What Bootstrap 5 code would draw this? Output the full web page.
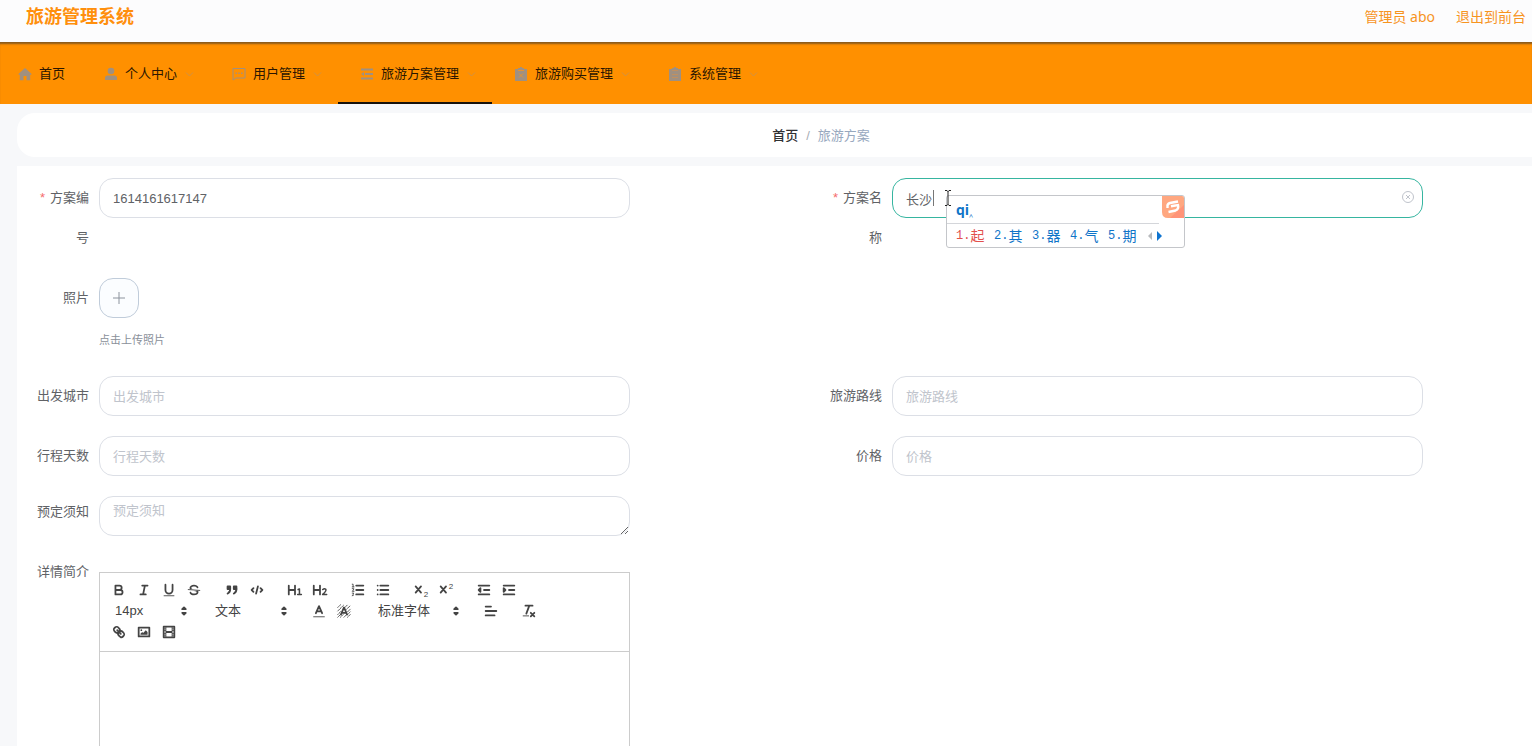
<!DOCTYPE html>
<html lang="zh-CN">
<head>
<meta charset="utf-8">
<meta name="viewport" content="width=device-width, initial-scale=1">
<title>旅游管理系统</title>
<link href="https://cdn.jsdelivr.net/npm/bootstrap@5.3.0/dist/css/bootstrap.min.css" rel="stylesheet">
<style>
  body { font: 13px/1.5 "Liberation Sans", "Noto Sans CJK SC", sans-serif; color: #606266; background: #f7f8fa; }
  a { text-decoration: none; }

  .topbar { height: 42px; padding: 0 6px 9px 26px; background: #fcfcfd; font-family: "Noto Sans", "Noto Sans CJK SC", sans-serif; font-size: 14px; }
  .topbar a { color: #f7941f; }
  .topbar .site-title { color: #ff8f0c; font-size: 18px; font-weight: 700; }
  .topbar .user-links { gap: 21px; }

  .mainmenu { height: 62px; background: #ff9000; box-shadow: inset 0 3px 2px -1px #8a5a1c; }
  .mainmenu .nav-link { height: 100%; padding: 4px 16px 0 22px; color: #2b1600; font-size: 13px; border-radius: 0; border-bottom: 2px solid transparent; display: flex; align-items: center; }
  .mainmenu .nav-link.home { padding: 4px 17px 0 18px; }
  .mainmenu .nav-link.active { border-bottom-color: #17120c; }
  .mainmenu .menu-icon { width: 14px; height: 14px; margin-right: 7px; color: #a09080; }
  .mainmenu .chev { width: 9px; height: 9px; margin-left: 8px; color: #cf9248; }

  .page-main { width: calc(100% + 93px); padding: 9px 0 0 17px; }
  .crumbs { height: 44px; border-radius: 18px; background: #fff; margin-bottom: 9px; padding-top: 2px; }
  .crumbs .breadcrumb { --bs-breadcrumb-item-padding-x: 8px; --bs-breadcrumb-divider-color: #a8adb5; font-size: 13px; }
  .crumbs a { color: #303133; font-weight: 500; }
  .crumbs .active { color: #97a8be; }

  .plan-form { background: #fff; padding: 12px 11px; }
  .field { display: flex; margin-bottom: 20px; }
  .field > label { flex: none; width: 71px; padding-right: 10px; text-align: right; line-height: 40px; font-size: 13px; }
  .field > label.tight { line-height: 32px; }
  .field .req { color: #f56c6c; margin-right: 5px; }
  .field .ctl { width: 67%; flex: none; position: relative; }
  .field .form-control { height: 40px; border: 1px solid #dcdfe6; border-radius: 14px; padding: 0 13px; font-size: 13px; color: #606266; background: #fff; }
  .field textarea.form-control { padding: 4px 13px; min-height: 40px; }
  .field .form-control::placeholder { color: #c0c4cc; }
  .field .form-control.editing { border-color: #36b5a0; }

  .clear-btn { position: absolute; right: 8px; top: 12px; width: 14px; height: 14px; padding: 0; border: 0; background: none; color: #c0c4cc; display: flex; }
  .caret-bar { position: absolute; left: 41px; top: 12px; width: 1px; height: 16px; background: #777; }
  .ibeam { position: absolute; left: 52px; top: 12px; width: 8px; height: 16px; z-index: 3; }

  .upload { width: 40px; height: 40px; border: 1px solid #c0ccda; border-radius: 14px; background: #fbfdff; color: #8c939d; padding: 0; display: flex; align-items: center; justify-content: center; }
  .upload-tip { font-size: 11px; line-height: 18px; padding: 13px 0 7px; color: #8a909a; }

  .ime { position: absolute; left: 54px; top: 17px; width: 239px; height: 53px; background: #fff; border: 1px solid #c4c6ca; border-radius: 3px; z-index: 2; color: #0f74c8; }
  .ime .typed { height: 28px; margin-right: 25px; padding-left: 9px; border-bottom: 1px solid #d4d6da; font: 700 14px/27px "Open Sans", sans-serif; }
  .ime .typed small { font-size: 10px; font-weight: 400; }
  .ime .cands { gap: 10px; height: 23px; padding-left: 9px; font-family: "Noto Sans CJK SC", sans-serif; font-size: 14px; line-height: 23px; }
  .ime .cands span { display: flex; width: 28px; }
  .ime .cands i { font: 12px/24px "Liberation Mono", monospace; }
  .ime .cands .first { color: #e2504c; }
  .ime .brand { position: absolute; right: 0; top: 0; width: 22px; height: 22px; }

  .editor { border: 1px solid #ccc; margin-top: 16px; }
  .editor .tools { padding: 6px 7px 9px 6px; border-bottom: 1px solid #ccc; display: flex; flex-wrap: wrap; }
  .editor .grp { display: flex; margin-right: 13px; height: 21px; }
  .editor .grp button { width: 25px; height: 21px; padding: 0; border: 0; background: none; display: flex; align-items: center; justify-content: center; }
  .editor .tools svg { width: 16px; height: 16px; fill: none; stroke: #444; stroke-width: 2; stroke-linecap: round; stroke-linejoin: round; }
  .editor svg .thin { stroke-width: 1; }
  .editor svg .solid { fill: #444; stroke: none; }
  .editor svg .both { fill: #444; }
  .editor svg text { fill: #444; stroke: none; font-family: "Liberation Sans", sans-serif; }
  .picker { position: relative; width: 87px; }
  .picker.wide { width: 96px; }
  .picker select { appearance: none; border: 0; background: none; width: 100%; height: 21px; padding: 0 9px; font-size: 13px; line-height: 21px; color: #444; }
  .picker svg { position: absolute; right: 1px; top: 3px; pointer-events: none; }
  .editor .writing { min-height: 320px; padding: 12px 15px; outline: 0; }
</style>
</head>
<body>
<div class="vh-100 overflow-hidden">
  <header class="topbar d-flex align-items-center justify-content-between">
    <a href="#" class="site-title">旅游管理系统</a>
    <div class="user-links d-flex">
      <a href="#">管理员 abo</a>
      <a href="#">退出到前台</a>
    </div>
  </header>

  <nav class="mainmenu nav flex-nowrap">
    <a class="nav-link home" href="#"><svg class="menu-icon" viewBox="0 0 14 14" fill="currentColor"><path d="M7 1 0.6 6.8v1h1.2V13.2H5.5V9h3v4.2h3.7V7.8h1.2v-1z"/></svg>首页</a>
    <a class="nav-link" href="#"><svg class="menu-icon" viewBox="0 0 14 14" fill="currentColor"><circle cx="7" cy="4" r="3.3"/><path d="M1 13v-2q0-2.5 2.5-2.5h7q2.500 0 2.500 2.500v2z"/></svg>个人中心<svg class="chev" viewBox="0 0 9 9" fill="none" stroke="currentColor"><path d="m1 2.500 3.500 3.500L8 2.500"/></svg></a>
    <a class="nav-link" href="#"><svg class="menu-icon" viewBox="0 0 14 14" fill="none" stroke="currentColor"><path d="M1 1.500h12v9.500H4L1 13z"/><path d="M3.500 6.200h1.400M6.300 6.200h1.400M9.100 6.200h1.400" stroke-width="1.400"/></svg>用户管理<svg class="chev" viewBox="0 0 9 9" fill="none" stroke="currentColor"><path d="m1 2.500 3.500 3.500L8 2.500"/></svg></a>
    <a class="nav-link active" href="#"><svg class="menu-icon" viewBox="0 0 14 14" fill="none" stroke="currentColor" stroke-width="2"><path d="M1 2.500h12M5 7h8M1 11.500h12"/><path d="M4 5v4L1 7z" fill="currentColor" stroke="none"/></svg>旅游方案管理<svg class="chev" viewBox="0 0 9 9" fill="none" stroke="currentColor"><path d="m1 2.500 3.500 3.500L8 2.500"/></svg></a>
    <a class="nav-link" href="#"><svg class="menu-icon" viewBox="0 0 14 14"><path fill="currentColor" d="M1 2h3V1h2V0h2v1h2v1h3v12H1z"/><path d="M4 3.500h6M5 6.500l4 4M9 6.500l-4 4" stroke="#e09438" fill="none"/></svg>旅游购买管理<svg class="chev" viewBox="0 0 9 9" fill="none" stroke="currentColor"><path d="m1 2.500 3.500 3.500L8 2.500"/></svg></a>
    <a class="nav-link" href="#"><svg class="menu-icon" viewBox="0 0 14 14"><path fill="currentColor" d="M1 2h3V1h2V0h2v1h2v1h3v12H1z"/><path d="M4 3.500h6M4 7.500h6M4 10.500h6" stroke="#c09060" fill="none"/></svg>系统管理<svg class="chev" viewBox="0 0 9 9" fill="none" stroke="currentColor"><path d="m1 2.500 3.500 3.500L8 2.500"/></svg></a>
  </nav>

  <main class="page-main">
    <nav class="crumbs d-flex align-items-center justify-content-center" aria-label="breadcrumb">
      <ol class="breadcrumb mb-0">
        <li class="breadcrumb-item"><a href="#">首页</a></li>
        <li class="breadcrumb-item active">旅游方案</li>
      </ol>
    </nav>

    <form class="plan-form">
      <div class="row g-0">
        <div class="col-6 field">
          <label for="planNo"><span class="req">*</span>方案编号</label>
          <div class="ctl"><input id="planNo" class="form-control" type="text" value="1614161617147"></div>
        </div>
        <div class="col-6 field">
          <label for="planName"><span class="req">*</span>方案名称</label>
          <div class="ctl">
            <input id="planName" class="form-control editing" type="text" value="长沙">
            <span class="caret-bar"></span>
            <svg class="ibeam" viewBox="0 0 8 16" fill="none" stroke="#222"><path d="M1 .5h2l1 1 1-1h2M4 1v14M1 15.500h2l1-1 1 1h2"/></svg>
            <button type="button" class="clear-btn" aria-label="清空"><svg width="14" height="14" viewBox="0 0 14 14" fill="none" stroke="currentColor"><circle cx="7" cy="7" r="5.500"/><path d="m5 5 4 4M9 5 5 9"/></svg></button>
            <div class="ime">
              <div class="typed">qi<small>‸</small></div>
              <div class="cands d-flex">
                <span class="first"><i>1.</i>起</span><span><i>2.</i>其</span><span><i>3.</i>器</span><span><i>4.</i>气</span><span><i>5.</i>期</span>
                <svg width="18" height="23" viewBox="0 0 18 23"><path d="M6 8v8L2 12z" fill="#b8babd"/><path d="M11 7v10l5-5z" fill="#0f74d0"/></svg>
              </div>
              <svg class="brand" viewBox="0 0 22 22"><path d="M0 0h20q2 0 2 2v20H6q-6 0-6-6z" fill="#ffa780"/><path d="M8 22 22 9v13z" fill="#ff9478"/><path d="M16 5.500 8 7q-3 1-2.500 3.500V12M9 10.300l7-1.200q1 4-2.500 5.400l-7 1.500" fill="none" stroke="#fff" stroke-width="2.400"/></svg>
            </div>
          </div>
        </div>

        <div class="col-12 field">
          <label for="photo">照片</label>
          <div>
            <button id="photo" type="button" class="upload" aria-label="上传照片"><svg width="12" height="12" viewBox="0 0 12 12" stroke="currentColor"><path d="M6 0v12M0 6h12"/></svg></button>
            <div class="upload-tip">点击上传照片</div>
          </div>
        </div>

        <div class="col-6 field">
          <label for="city">出发城市</label>
          <div class="ctl"><input id="city" class="form-control" type="text" placeholder="出发城市"></div>
        </div>
        <div class="col-6 field">
          <label for="route">旅游路线</label>
          <div class="ctl"><input id="route" class="form-control" type="text" placeholder="旅游路线"></div>
        </div>
        <div class="col-6 field">
          <label for="days">行程天数</label>
          <div class="ctl"><input id="days" class="form-control" type="text" placeholder="行程天数"></div>
        </div>
        <div class="col-6 field">
          <label for="price">价格</label>
          <div class="ctl"><input id="price" class="form-control" type="text" placeholder="价格"></div>
        </div>
        <div class="col-6 field">
          <label for="notice" class="tight">预定须知</label>
          <div class="ctl"><textarea id="notice" class="form-control" rows="1" placeholder="预定须知"></textarea></div>
        </div>
        <div class="col-6"></div>

        <div class="col-6 field">
          <label id="introLabel" class="tight">详情简介</label>
          <div class="ctl">
            <div class="editor">
              <div class="tools">
                <div class="grp">
                  <button type="button" aria-label="加粗"><svg viewBox="0 0 18 18"><path d="M5 4h4.500a2.500 2.500 0 0 1 0 5H5zM5 9h5.500a2.500 2.500 0 0 1 0 5H5z"/></svg></button>
                  <button type="button" aria-label="斜体"><svg viewBox="0 0 18 18"><path d="M7 4h6M5 14h6M8 14l2-10"/></svg></button>
                  <button type="button" aria-label="下划线"><svg viewBox="0 0 18 18"><path d="M5 3v6a4 4 0 0 0 8 0V3"/><rect class="solid" x="3" y="15" width="12" height="1"/></svg></button>
                  <button type="button" aria-label="删除线"><svg viewBox="0 0 18 18"><path class="thin" d="M2.500 8.500l13 1"/><path class="solid" d="M9.007,8C6.542,7.791,6,7.519,6,6.5,6,5.792,7.283,5,9,5c1.571,0,2.765.679,2.969,1.309a1,1,0,0,0,1.9-.617C13.356,4.106,11.354,3,9,3,6.2,3,4,4.538,4,6.500a3.200,3.200,0,0,0,.5,1.843Z"/><path class="solid" d="M8.984,10C11.457,10.208,12,10.479,12,11.5c0,.708-1.283,1.5-3,1.5-1.571,0-2.765-.679-2.969-1.309a1,1,0,1,0-1.9.617C4.644,13.894,6.646,15,9,15c2.8,0,5-1.538,5-3.500a3.200,3.200,0,0,0-.5-1.843Z"/></svg></button>
                </div>
                <div class="grp">
                  <button type="button" aria-label="引用"><svg viewBox="0 0 18 18"><path class="both" d="M4 5h3v3H4zM11 5h3v3h-3z"/><path class="both" d="M7 8c0 4-3 5-3 5M14 8c0 4-3 5-3 5"/></svg></button>
                  <button type="button" aria-label="代码"><svg viewBox="0 0 18 18"><path d="M5 7 3 9l2 2M13 7l2 2-2 2M10 5 8 13"/></svg></button>
                </div>
                <div class="grp">
                  <button type="button" aria-label="标题1"><svg viewBox="0 0 18 18"><path d="M2 4v10M9 4v10M2 9h7"/><path d="M12.500 8.500 14 7.800V14M12 14h4.200" style="stroke-width:1.700"/></svg></button>
                  <button type="button" aria-label="标题2"><svg viewBox="0 0 18 18"><path d="M2 4v10M9 4v10M2 9h7"/><path d="M12 8.500q2-1.500 3.500-.3 1.200 1.800-3.500 5.800h4.500" style="stroke-width:1.700"/></svg></button>
                </div>
                <div class="grp">
                  <button type="button" aria-label="有序列表"><svg viewBox="0 0 18 18"><path d="M7 4h8M7 9h8M7 14h8"/><path class="thin" d="M2.500 2.500h1v3M2.500 5.500h2M2.500 7.500h1.800q0 1.500-1.800 3h2M2.500 12.500h1.700l-.7 1.300q1.500 1.500-1 1.700"/></svg></button>
                  <button type="button" aria-label="无序列表"><svg viewBox="0 0 18 18"><path d="M6 4h9M6 9h9M6 14h9M3 4h0M3 9h0M3 14h0"/></svg></button>
                </div>
                <div class="grp">
                  <button type="button" aria-label="下标"><svg viewBox="0 0 18 18"><path d="M3 5l6 7M9 5l-6 7"/><text x="12" y="16.500" font-size="9">2</text></svg></button>
                  <button type="button" aria-label="上标"><svg viewBox="0 0 18 18"><path d="M3 5l6 7M9 5l-6 7"/><text x="12" y="8" font-size="9">2</text></svg></button>
                </div>
                <div class="grp">
                  <button type="button" aria-label="减少缩进"><svg viewBox="0 0 18 18"><path d="M3 4h12M9 9h6M3 14h12"/><path class="both" d="M5 7v4L3 9z"/></svg></button>
                  <button type="button" aria-label="增加缩进"><svg viewBox="0 0 18 18"><path d="M3 4h12M9 9h6M3 14h12"/><path class="both" d="M3 7v4l2-2z"/></svg></button>
                </div>
                <div class="grp picker">
                  <select aria-label="字号"><option>14px</option></select>
                  <svg viewBox="0 0 18 18"><path class="both" d="m7 11 2 2 2-2zM7 7l2-2 2 2z"/></svg>
                </div>
                <div class="grp picker">
                  <select aria-label="段落"><option>文本</option></select>
                  <svg viewBox="0 0 18 18"><path class="both" d="m7 11 2 2 2-2zM7 7l2-2 2 2z"/></svg>
                </div>
                <div class="grp">
                  <button type="button" aria-label="文字颜色"><svg viewBox="0 0 18 18"><path d="M5.500 11.500 9 3.500l3.500 8M6.500 9.500h5"/><path class="thin" d="M3 15.500h12"/></svg></button>
                  <button type="button" aria-label="背景颜色"><svg viewBox="0 0 18 18"><path class="thin" stroke-dasharray="1 1" d="M2 5l3-3M2 9l7-7M2 13l4-4M9 6l4-4M2 16l4-4M12 7l4-4M5 16l3-3M13 10l3-3M9 16l3-3M13 16l3-3M13 13l3-3"/><path d="M5.500 13 9 5l3.500 8M6.400 11h5.200"/></svg></button>
                </div>
                <div class="grp picker wide">
                  <select aria-label="字体"><option>标准字体</option></select>
                  <svg viewBox="0 0 18 18"><path class="both" d="m7 11 2 2 2-2zM7 7l2-2 2 2z"/></svg>
                </div>
                <div class="grp"><button type="button" aria-label="对齐"><svg viewBox="0 0 18 18"><path d="M3 4h6M3 9h12M3 14h10"/></svg></button></div>
                <div class="grp"><button type="button" aria-label="清除格式"><svg viewBox="0 0 18 18"><path d="M5 3h8M6 12l3.350-9M11 11l4 4M15 11l-4 4"/><rect class="solid" x="2" y="14" width="7" height="1"/></svg></button></div>
                <div class="grp">
                  <button type="button" aria-label="链接"><svg viewBox="0 0 18 18"><path d="M7 7l4 4"/><path d="M8.9,4.577a3.476,3.476,0,0,1,.36,4.679A3.476,3.476,0,0,1,4.577,8.9C3.185,7.5,2.035,6.4,4.217,4.217S7.5,3.185,8.9,4.577Z"/><path d="M13.423,9.1a3.476,3.476,0,0,0-4.679-.36,3.476,3.476,0,0,0,.36,4.679c1.392,1.392,2.5,2.542,4.679.36S14.815,10.5,13.423,9.1Z"/></svg></button>
                  <button type="button" aria-label="图片"><svg viewBox="0 0 18 18"><rect x="3" y="4" width="12" height="10"/><circle class="solid" cx="6" cy="7" r="1"/><path class="solid" d="M5 12v-1l2-2 1 1 3-3 2 2v3z"/></svg></button>
                  <button type="button" aria-label="视频"><svg viewBox="0 0 18 18"><rect x="3" y="3" width="12" height="12"/><path class="solid" d="M5 3h1v12H5zM12 3h1v12h-1zM5 8h8v2H5zM3 5h3v1H3zM3 7h3v1H3zM3 10h3v1H3zM3 12h3v1H3zM12 5h3v1h-3zM12 7h3v1h-3zM12 10h3v1h-3zM12 12h3v1h-3z"/></svg></button>
                </div>
              </div>
              <div class="writing" contenteditable="true" role="textbox" aria-labelledby="introLabel"></div>
            </div>
          </div>
        </div>
      </div>
    </form>
  </main>
</div>
<script src="https://cdn.jsdelivr.net/npm/bootstrap@5.3.0/dist/js/bootstrap.bundle.min.js"></script>
</body>
</html>
